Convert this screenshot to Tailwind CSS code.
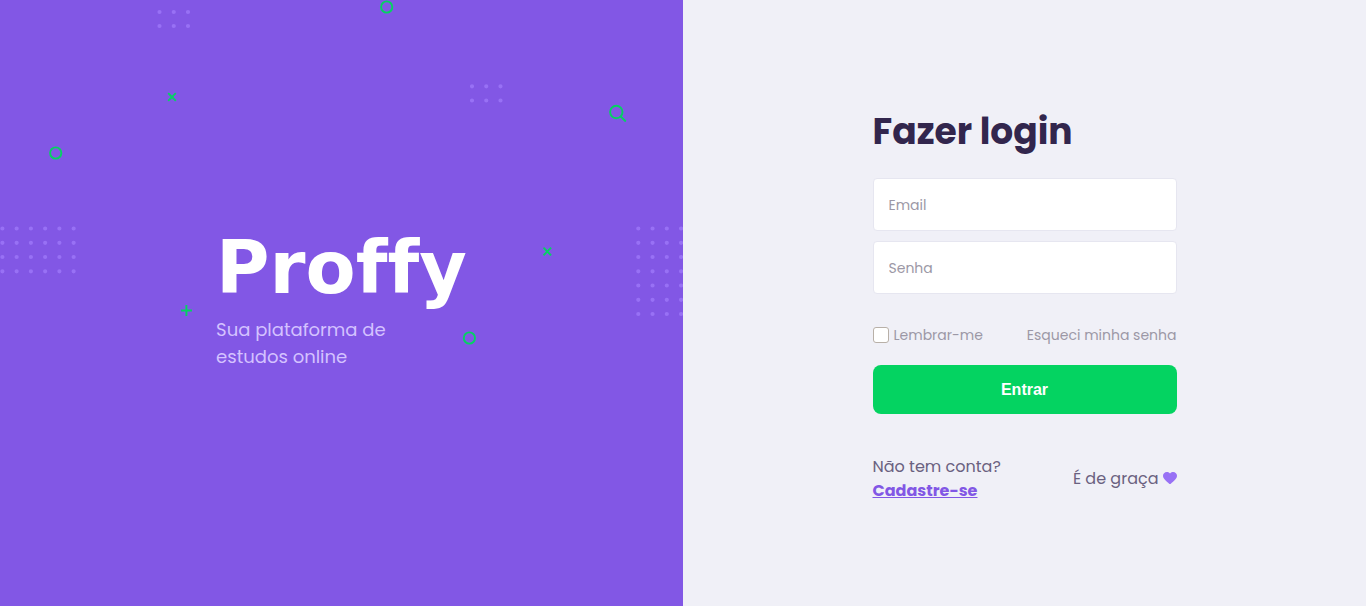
<!DOCTYPE html>
<html lang="pt-BR">
<head>
<meta charset="utf-8">
<meta name="viewport" content="width=device-width, initial-scale=1">
<title>Proffy - Fazer login</title>
<script src="https://cdn.jsdelivr.net/npm/@tailwindcss/browser@4"></script>
</head>
<body class="bg-[#f0f0f7] font-['Poppins','Inter',sans-serif]">
<main class="grid min-h-screen grid-cols-2">
  <section class="relative flex items-center justify-center overflow-hidden bg-[#8257e5]">
    <svg class="absolute inset-0 h-full w-full" viewBox="0 0 683 606" preserveAspectRatio="xMidYMid slice" fill="none" aria-hidden="true">
      <g stroke="#9871f5" stroke-width="4.2" stroke-linecap="round" stroke-dasharray="0 14.25">
        <path d="M159.5 12h29M159.5 26h29"/>
        <path d="M472 86.3h29M472 100.5h29"/>
        <path d="M2.4 228.5h72M2.4 242.8h72M2.4 257h72M2.4 271.3h72"/>
        <path d="M638.3 228.5h44M638.3 242.8h44M638.3 257h44M638.3 271.3h44M638.3 285.5h44M638.3 299.8h44M638.3 314h44"/>
      </g>
      <g stroke="#04d361" stroke-width="1.9">
        <circle cx="386.7" cy="7" r="5.6"/>
        <circle cx="55.7" cy="153" r="5.6"/>
        <circle cx="469.4" cy="338" r="5.6"/>
        <circle cx="616.3" cy="112" r="6.2"/>
        <path d="M620.6 116.3l5.2 5.2"/>
        <path d="M168.200 93.200l7.600 7.600m0-7.600l-7.600 7.600"/>
        <path d="M543.500 247.700l7.600 7.600m0-7.600l-7.600 7.600"/>
        <path d="M181 310.500h11M186.400 305v11"/>
      </g>
    </svg>
    <div class="relative">
      <p class="mb-4 font-['DejaVu_Sans'] text-[73px] leading-16 font-bold text-white [font-variant-ligatures:none]">Proffy</p>
      <p class="text-lg leading-[27px] text-[#d4c2ff]">Sua plataforma de<br>estudos online</p>
    </div>
  </section>
  <section class="flex items-center justify-center px-4">
    <div class="w-full max-w-76">
      <h1 class="mb-[17px] text-4xl leading-[58px] font-bold text-[#32264d]">Fazer login</h1>
      <form>
        <div class="flex flex-col gap-[10px]">
          <input type="email" aria-label="Email" placeholder="Email" class="h-[53px] w-full rounded border border-[#e6e6f0] bg-white px-[15px] pt-0.5 text-sm text-[#6a6180] placeholder:text-[#9c98a6]">
          <input type="password" aria-label="Senha" placeholder="Senha" class="h-[53px] w-full rounded border border-[#e6e6f0] bg-white px-[15px] pt-0.5 text-sm text-[#6a6180] placeholder:text-[#9c98a6]">
        </div>
        <div class="mt-[31px] mb-5 flex items-center justify-between text-sm text-[#9c98a6]">
          <label class="flex items-center gap-[5px]"><input type="checkbox" class="size-4 appearance-none rounded-[3px] border border-[#b8b0a8] bg-white checked:bg-[#8257e5]">Lembrar-me</label>
          <a href="#">Esqueci minha senha</a>
        </div>
        <button type="submit" class="h-[49px] w-full rounded-lg bg-[#04d361] font-['Liberation_Sans'] text-base font-bold text-white">Entrar</button>
      </form>
      <footer class="mt-[41px] flex items-center justify-between text-base text-[#6a6180]">
        <p>Não tem conta?<br><a href="#" class="font-bold text-[#8257e5] underline">Cadastre-se</a></p>
        <p class="flex items-center gap-1">É de graça
          <svg class="mb-0.5 h-3 w-[14px]" viewBox="0 0 15 12.5" preserveAspectRatio="none" fill="#9871f5" aria-hidden="true"><path d="M7.500 1.600C6.400.3 5.200 0 4.100 0 1.800 0 0 1.800 0 4c0 3.200 4.100 6.200 6.600 8.200.6.4 1.200.4 1.800 0C10.900 10.200 15 7.200 15 4c0-2.200-1.800-4-4.100-4-1.100 0-2.300.3-3.400 1.600z"/></svg>
        </p>
      </footer>
    </div>
  </section>
</main>
</body>
</html>
